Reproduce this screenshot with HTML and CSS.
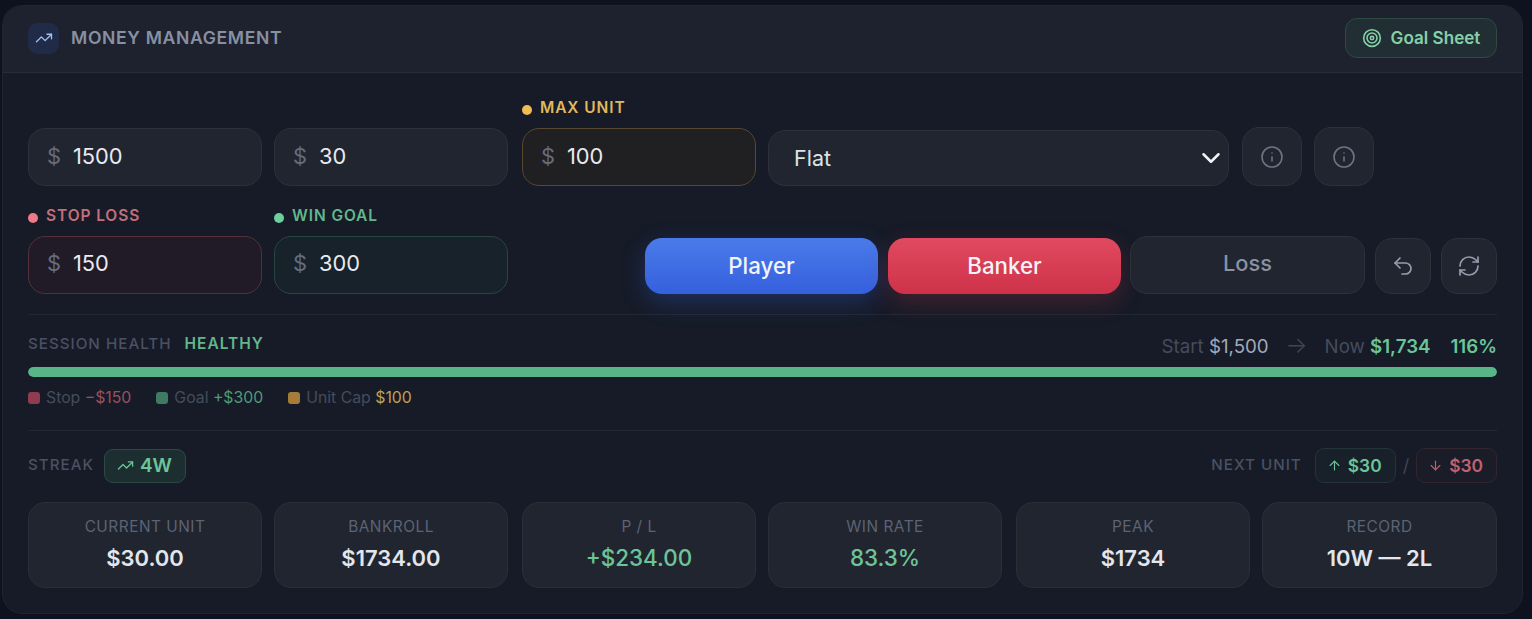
FILE: index.html
```html
<!DOCTYPE html>
<html lang="en">
<head>
<meta charset="utf-8">
<title>Money Management</title>
<link rel="stylesheet" href="styles.css">
</head>
<body>
<section class="card">
  <header class="head">
    <div class="title">
      <span class="logo"><svg viewBox="0 0 24 24" class="ic ic-18"><polyline points="22 7 13.5 15.5 8.5 10.5 2 17"/><polyline points="16 7 22 7 22 13"/></svg></span>
      <h1>MONEY MANAGEMENT</h1>
    </div>
    <button class="goal"><svg viewBox="0 0 24 24" class="ic ic-target"><circle cx="12" cy="12" r="10"/><circle cx="12" cy="12" r="6"/><circle cx="12" cy="12" r="2"/></svg>Goal Sheet</button>
  </header>
  <div class="body">
    <div class="grid">
      <div class="field"><div class="money"><span>$</span><input value="1500" aria-label="Bankroll"></div></div>
      <div class="field"><div class="money"><span>$</span><input value="30" aria-label="Unit"></div></div>
      <div class="field"><label class="lab amber"><i></i>MAX UNIT</label><div class="money m-amber"><span>$</span><input value="100" aria-label="Max unit"></div></div>
      <div class="strategy">
        <div class="selwrap">
          <select aria-label="Strategy"><option>Flat</option></select>
          <svg viewBox="0 0 24 24" class="ic chev"><path d="m6 9 6 6 6-6"/></svg>
        </div>
        <button class="sq tall"><svg viewBox="0 0 24 24" class="ic ic-info"><circle cx="12" cy="12" r="10"/><path d="M12 16v-4"/><path d="M12 8h.01"/></svg></button>
        <button class="sq tall"><svg viewBox="0 0 24 24" class="ic ic-info"><circle cx="12" cy="12" r="10"/><path d="M12 16v-4"/><path d="M12 8h.01"/></svg></button>
      </div>
    </div>
    <div class="grid row2">
      <div class="field"><label class="lab red"><i></i>STOP LOSS</label><div class="money m-red"><span>$</span><input value="150" aria-label="Stop loss"></div></div>
      <div class="field"><label class="lab green"><i></i>WIN GOAL</label><div class="money m-green"><span>$</span><input value="300" aria-label="Win goal"></div></div>
      <div class="actions">
        <button class="act player">Player</button>
        <button class="act banker">Banker</button>
        <button class="loss">Loss</button>
        <button class="sq"><svg viewBox="0 0 24 24" class="ic ic-tool"><path d="M9 14 4 9l5-5"/><path d="M4 9h10.5a5.5 5.5 0 0 1 5.5 5.5a5.5 5.5 0 0 1-5.5 5.5H11"/></svg></button>
        <button class="sq"><svg viewBox="0 0 24 24" class="ic ic-tool"><path d="M3 12a9 9 0 0 1 9-9 9.75 9.75 0 0 1 6.74 2.74L21 8"/><path d="M21 3v5h-5"/><path d="M21 12a9 9 0 0 1-9 9 9.75 9.75 0 0 1-6.74-2.74L3 16"/><path d="M8 16H3v5"/></svg></button>
      </div>
    </div>
    <div class="health">
      <div class="hrow">
        <div class="hleft"><span class="cap">SESSION HEALTH</span><b>HEALTHY</b></div>
        <div class="hright"><span>Start <em>$1,500</em></span><span class="arrow">→</span><span>Now <strong>$1,734</strong></span><strong>116%</strong></div>
      </div>
      <div class="bar"><div class="fill"></div></div>
      <div class="legend">
        <span><i class="k-red"></i>Stop <em class="t-red">−$150</em></span>
        <span><i class="k-green"></i>Goal <em class="t-green">+$300</em></span>
        <span><i class="k-amber"></i>Unit Cap <em class="t-amber">$100</em></span>
      </div>
    </div>
    <div class="streakrow">
      <div class="side"><span class="cap lift">STREAK</span><span class="chip"><svg viewBox="0 0 24 24" class="ic ic-chip"><polyline points="22 7 13.5 15.5 8.5 10.5 2 17"/><polyline points="16 7 22 7 22 13"/></svg>4W</span></div>
      <div class="side"><span class="cap lift">NEXT UNIT</span>
        <div class="next">
          <span class="pill up"><svg viewBox="0 0 24 24" class="ic ic-arrow"><path d="m5 12 7-7 7 7"/><path d="M12 19V5"/></svg>$30</span>
          <span class="slash">/</span>
          <span class="pill down"><svg viewBox="0 0 24 24" class="ic ic-arrow"><path d="M12 5v14"/><path d="m19 12-7 7-7-7"/></svg>$30</span>
        </div>
      </div>
    </div>
    <div class="grid stats">
      <div class="stat"><small>CURRENT UNIT</small><b>$30.00</b></div>
      <div class="stat"><small>BANKROLL</small><b>$1734.00</b></div>
      <div class="stat"><small>P / L</small><b class="pos">+$234.00</b></div>
      <div class="stat"><small>WIN RATE</small><b class="pos">83.3%</b></div>
      <div class="stat"><small>PEAK</small><b>$1734</b></div>
      <div class="stat"><small>RECORD</small><b>10W — 2L</b></div>
    </div>
  </div>
</section>
</body>
</html>
```
FILE: styles.css
```css
* { box-sizing: border-box; }
html, body { margin: 0; height: 100%; }
body {
  background: #0d121e;
  padding: 5px 9px 5px 2px;
  font-family: Inter, "Noto Sans", sans-serif;
  color: #e5e8ef;
  overflow: hidden;
}
button, input, select { font-family: inherit; }
.ic { fill: none; stroke: currentColor; stroke-width: 2; stroke-linecap: round; stroke-linejoin: round; display: block; flex: none; }
.ic-18 { width: 18px; height: 18px; stroke-width: 1.8; }
.ic-target { width: 20px; height: 20px; stroke-width: 1.9; }
.ic-info { width: 24px; height: 24px; color: #6b7385; stroke-width: 1.6; }
.ic-tool { width: 24px; height: 24px; color: #959cad; stroke-width: 1.7; }
.ic-chip { width: 17px; height: 17px; stroke-width: 1.8; }
.ic-arrow { width: 15px; height: 15px; stroke-width: 1.8; }

.card {
  height: 609px;
  border: 1px solid #20242f;
  border-radius: 20px;
  background: #161b27;
  overflow: hidden;
}
.head {
  height: 67px;
  display: flex;
  align-items: center;
  justify-content: space-between;
  padding: 0 25px 2px;
  background: #1e222e;
  border-bottom: 1px solid #282c37;
}
.title { display: flex; align-items: center; gap: 12px; }
.logo {
  width: 31px; height: 31px;
  border-radius: 9px;
  background: #1f2b47;
  color: #a5bff0;
  display: flex; align-items: center; justify-content: center;
}
h1 { margin: 0 0 2px; font-size: 17.6px; font-weight: 600; letter-spacing: 0.65px; color: #8890a3; }
.goal {
  height: 40px;
  width: 152px;
  display: flex; align-items: center; justify-content: center; gap: 9px;
  border: 1px solid #2d4a45;
  border-radius: 12px;
  background: #212e33;
  color: #86d0a8;
  font-size: 17.1px; font-weight: 600;
  padding: 0 0 2px;
}
.goal .ic { margin-top: 2px; }
.body { padding: 24px 25px 0; }
.grid { display: grid; grid-template-columns: 246px 248px 246px 248px 246px 235px; }
.field { display: flex; flex-direction: column; justify-content: flex-end; width: 234px; }
.lab {
  display: flex; align-items: center; gap: 8px;
  height: 20px; margin-bottom: 11px;
  font-size: 15.5px; font-weight: 600; letter-spacing: 0.9px;
}
.lab i { width: 10px; height: 10px; border-radius: 50%; margin-top: 5px; }
.amber { color: #e0b95e; } .amber i { background: #f0bd55; }
.red { color: #c46e7c; } .red i { background: #ee7a88; }
.green { color: #62b78d; } .green i { background: #6bd09c; }

.money {
  height: 58px;
  display: flex; align-items: center;
  border: 1px solid #2d313c;
  border-radius: 17px;
  background: #21252f;
  padding: 0 0 2px 18px;
}
.row2 .money { padding-bottom: 4px; }
.money span { font-size: 21.8px; color: #646c7e; width: 26px; flex: none; }
.money input {
  min-width: 0; width: 100%;
  border: 0; outline: 0; background: none; padding: 0;
  color: #e8eaf0; font-size: 21.8px; font-weight: 400;
}
.m-amber { background: #201f22; border-color: #57482f; }
.m-red { background: #201b27; border-color: #55303c; }
.m-green { background: #18222a; border-color: #284640; }

.strategy { grid-column: span 3; display: flex; align-items: flex-end; gap: 12px; }
.selwrap { position: relative; width: 461px; flex: none; margin-right: 1px; }
select {
  display: block; width: 100%; height: 56px;
  appearance: none;
  border: 1px solid #2d313c;
  border-radius: 17px;
  background: #21252f;
  color: #dde1ea;
  font-size: 21.5px;
  padding: 0 25px;
}
.chev { position: absolute; right: 3px; top: 13px; width: 30px; height: 30px; color: #f0f2f6; pointer-events: none; }
.sq {
  width: 56px; height: 56px; flex: none;
  display: flex; align-items: center; justify-content: center;
  border: 1px solid #2d313c;
  border-radius: 17px;
  background: #21252f;
  padding: 0;
}
.tall { width: 60px; height: 59px; }

.row2 { margin-top: 19px; }
.actions {
  grid-column: span 4;
  display: flex; align-items: flex-end; gap: 10px;
  padding-left: 123px;
}
.act {
  width: 233px; height: 56px;
  border: 0; border-radius: 17px;
  color: #f2f4fa;
  font-size: 22.3px; font-weight: 500;
  padding: 0 0 2px;
}
.player { background: linear-gradient(#4a7bea, #3560de); box-shadow: 0 8px 24px rgba(53, 96, 222, .3); }
.banker { background: linear-gradient(#e04a60, #ce3249); box-shadow: 0 8px 24px rgba(206, 50, 73, .25); margin-right: -1px; }
.loss {
  width: 235px; height: 58px;
  border: 1px solid #2d313c;
  border-radius: 17px;
  background: #21252f;
  color: #8a92a3;
  font-size: 21.8px; font-weight: 500;
  padding: 0 0 4px;
}

.health { margin-top: 20px; border-top: 1px solid #222732; padding-top: 18px; }
.hrow { display: flex; justify-content: space-between; align-items: center; height: 26px; }
.hleft { display: flex; gap: 13px; align-items: center; margin-top: -5px; }
.cap { font-size: 15.2px; font-weight: 500; letter-spacing: 1px; color: #4a5163; }
.lift { margin-top: -2px; }
.hleft b { font-size: 15.5px; font-weight: 600; letter-spacing: 1px; color: #62b78d; }
.hright { display: flex; align-items: center; gap: 20px; font-size: 18.7px; color: #454c5d; }
.hright em { font-style: normal; color: #a3aab8; }
.hright strong { font-weight: 600; color: #6cc598; }
.arrow { color: #3e4556; font-size: 23px; font-weight: 300; margin: -2px -3px 0; line-height: 1; }
.bar { margin-top: 8px; height: 10px; border-radius: 5px; background: #272b36; overflow: hidden; }
.fill { height: 100%; background: #57b587; border-radius: 5px; }
.legend { display: flex; gap: 25px; margin-top: 9px; font-size: 15.8px; color: #454c5d; height: 22px; align-items: center; }
.legend span { display: flex; align-items: center; white-space: pre; }
.legend i { width: 12px; height: 12px; border-radius: 3px; margin-right: 6px; margin-top: 2px; }
.legend em { font-style: normal; }
.k-red { background: #8f3b50; } .k-green { background: #3f7a62; } .k-amber { background: #a67d38; }
.t-red { color: #9b5060; } .t-green { color: #4e9a78; } .t-amber { color: #c2a052; }

.streakrow {
  margin-top: 22px; border-top: 1px solid #222732;
  padding-top: 17px; height: 53px;
  display: flex; justify-content: space-between; align-items: flex-start;
}
.side { display: flex; align-items: center; gap: 10px; height: 35px; }
.chip {
  height: 34px; padding: 0 13px 0 12px;
  display: flex; align-items: center; gap: 6px;
  border: 1px solid #2b4a44; border-radius: 9px;
  background: #1d2e30; color: #6cc598;
  font-size: 19px; font-weight: 600;
}
.next { display: flex; align-items: center; gap: 7px; margin-left: 3px; }
.pill {
  height: 35px; padding: 0 13px 0 11px;
  display: flex; align-items: center; gap: 6px;
  border-radius: 9px; border: 1px solid;
  font-size: 17.4px; font-weight: 600;
}
.up { border-color: #24343a; color: #6cc598; background: #182029; }
.down { border-color: #33252f; color: #c0616f; background: #1a1c28; }
.slash { color: #3e4556; font-size: 18px; }

.stats { margin-top: 19px; }
.stat {
  height: 86px; width: 234px;
  display: flex; flex-direction: column; align-items: center;
  border: 1px solid #2a2e39;
  border-radius: 17px;
  background: #21252f;
  padding-top: 14px;
}
.stat:last-child { width: 235px; }
.stat small { font-size: 15.4px; letter-spacing: .5px; color: #5b6375; line-height: 20px; }
.stat b { font-size: 22px; font-weight: 600; color: #e3e6ed; line-height: 28px; margin-top: 7px; }
.stat b.pos { color: #6cc598; font-weight: 500; font-size: 22.4px; }
```
